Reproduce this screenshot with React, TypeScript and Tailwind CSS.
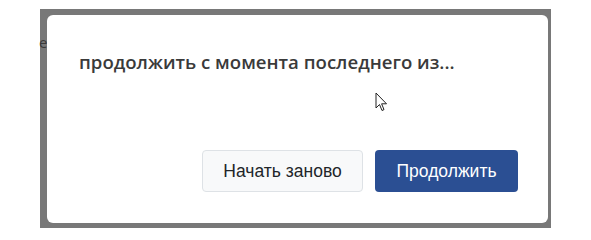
export default function App() {
  return (
    <div className="relative h-[237px] w-[591px] bg-white pl-[40px] pt-[9px]">
      <div className="relative h-[219px] w-[511px] bg-[#787878] pl-[7px] pt-[6px]">
        <span className="absolute left-[-1px] top-[22px] font-['Open_Sans',sans-serif] text-[15px] text-[#3a3a3a]">
          е
        </span>
        <div className="relative flex h-[208px] w-[501px] flex-col rounded-[6px] bg-white pl-[32px] pr-[30px] pt-[34px] pb-[31px]">
          <h2 className="font-['Open_Sans',sans-serif] text-[18.6px] font-semibold leading-[26px] text-[#3a3a3a]">
            продолжить с момента последнего из...
          </h2>
          <div className="mt-auto flex justify-end gap-[12px]">
            <button className="h-[42px] w-[161px] rounded-[4px] border border-[#dee2e6] bg-[#f8f9fa] font-['Liberation_Sans',Arial,sans-serif] text-[17.5px] text-[#212529]">
              Начать заново
            </button>
            <button className="h-[42px] w-[143px] rounded-[4px] bg-[#2b4f93] font-['Liberation_Sans',Arial,sans-serif] text-[17.5px] text-white">
              Продолжить
            </button>
          </div>
          <svg
            className="absolute left-[328px] top-[77px]"
            width="13"
            height="20"
            viewBox="0 0 13 20"
          >
            <path
              d="M1 1 L1 16 L4.5 12.5 L7 18.5 L9 17.6 L6.6 11.8 L11.5 11.8 Z"
              fill="white"
              stroke="#222"
              strokeWidth="1"
              strokeLinejoin="round"
            />
          </svg>
        </div>
      </div>
    </div>
  );
}
